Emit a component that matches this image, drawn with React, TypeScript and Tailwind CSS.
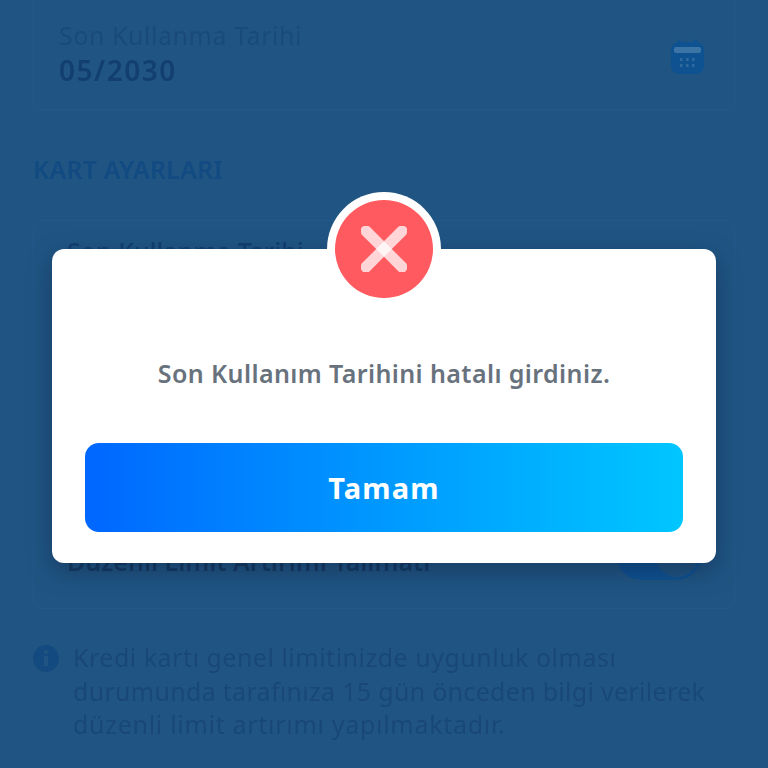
const font = "font-['Noto_Sans',sans-serif]"

function CalendarIcon() {
  return (
    <svg width="36" height="36" viewBox="0 0 36 36" fill="none">
      <rect x="1" y="3" width="33" height="32" rx="8" fill="#0f5292" />
      <rect x="4" y="8" width="27" height="6" rx="2" fill="#3d74a6" />
      <rect x="8" y="0" width="3" height="6" rx="1.5" fill="#0f5292" />
      <rect x="24" y="0" width="3" height="6" rx="1.5" fill="#0f5292" />
      {[10, 16, 22].map(x =>
        [19, 25].map(y => <rect key={`${x}-${y}`} x={x} y={y} width="2.5" height="3" fill="#2f6a9f" />)
      )}
    </svg>
  )
}

function ErrorBadge() {
  return (
    <div className="absolute left-1/2 top-[-57px] -translate-x-1/2 w-[114px] h-[114px] rounded-full bg-white flex items-center justify-center">
      <div className="w-[98px] h-[98px] rounded-full bg-[#ff5a5f] flex items-center justify-center">
        <svg width="46" height="46" viewBox="0 0 46 46">
          <path d="M5 5 41 41" stroke="#fff" strokeOpacity="0.75" strokeWidth="11" strokeLinecap="round" />
          <path d="M41 5 5 41" stroke="#fff" strokeOpacity="0.75" strokeWidth="11" strokeLinecap="round" />
        </svg>
      </div>
    </div>
  )
}

export default function App() {
  return (
    <div className={`relative w-[768px] h-[768px] overflow-hidden bg-[#205583] ${font}`}>
      {/* Page behind the dialog */}
      <div className="flex flex-col px-[33px] blur-[0.6px]">
        <div className="h-[110px] border border-t-0 border-[#23588a] rounded-b-lg flex items-center justify-between pl-[25px] pr-[27px]">
          <div className="flex flex-col mt-[-2px]">
            <span className="text-[25px] leading-[32px] tracking-[0.55px] text-[#1a4a7c]">Son Kullanma Tarihi</span>
            <span className="text-[28px] leading-[38px] font-semibold tracking-[1.5px] text-[#123f70]">05/2030</span>
          </div>
          <div className="mt-[5px] mr-[1px]">
            <CalendarIcon />
          </div>
        </div>
        <div className="mt-[43px] text-[25px] leading-[32px] font-semibold text-[#124a82] tracking-[0.2px]">KART AYARLARI</div>
        <div className="mt-[35px] h-[389px] border border-[#23588a] rounded-lg flex flex-col justify-between px-[33px] pt-[14px] pb-[28px]">
          <span className="text-[25px] leading-[32px] font-medium text-[#123f70]">Son Kullanma Tarihi</span>
          <div className="flex items-center justify-between">
            <span className="text-[25px] leading-[32px] font-semibold text-[#123a62]">Düzenli Limit Artırımı Talimatı</span>
            <div className="w-[84px] h-[48px] rounded-full bg-[#0f5292] flex items-center justify-end pr-[3px] mt-[-10px]">
              <div className="w-[42px] h-[42px] rounded-full bg-[#205583]" />
            </div>
          </div>
        </div>
        <div className="mt-[32px] flex gap-[14px]">
          <svg className="shrink-0 mt-[4px]" width="26" height="27" viewBox="0 0 26 27">
            <ellipse cx="13" cy="13.5" rx="13" ry="13.5" fill="#134a80" />
            <circle cx="13" cy="7" r="2" fill="#205583" />
            <rect x="11" y="11" width="4" height="10" fill="#205583" />
          </svg>
          <p className="text-[25px] leading-[33.5px] tracking-[0.5px] text-[#194877]">
            Kredi kartı genel limitinizde uygunluk olması<br />
            <span className="tracking-[0.3px]">durumunda tarafınıza 15 gün önceden bilgi verilerek</span><br />
            <span className="tracking-[0.7px]">düzenli limit artırımı yapılmaktadır.</span>
          </p>
        </div>
      </div>

      {/* Dialog */}
      <div className="absolute left-[52px] top-[249px] w-[664px] h-[314px] bg-white rounded-[12px] shadow-[0_8px_24px_rgba(10,30,60,0.45)] px-[33px] flex flex-col">
        <ErrorBadge />
        <p className="mt-[106px] text-center text-[25px] leading-[36px] font-semibold tracking-[0.4px] text-[#68727d]">
          Son Kullanım Tarihini hatalı girdiniz.
        </p>
        <button className="mt-[52px] h-[89px] rounded-[14px] bg-gradient-to-r from-[#0066ff] to-[#00c6ff] text-white text-[29px] font-bold tracking-[1.2px]">
          Tamam
        </button>
      </div>
    </div>
  )
}
